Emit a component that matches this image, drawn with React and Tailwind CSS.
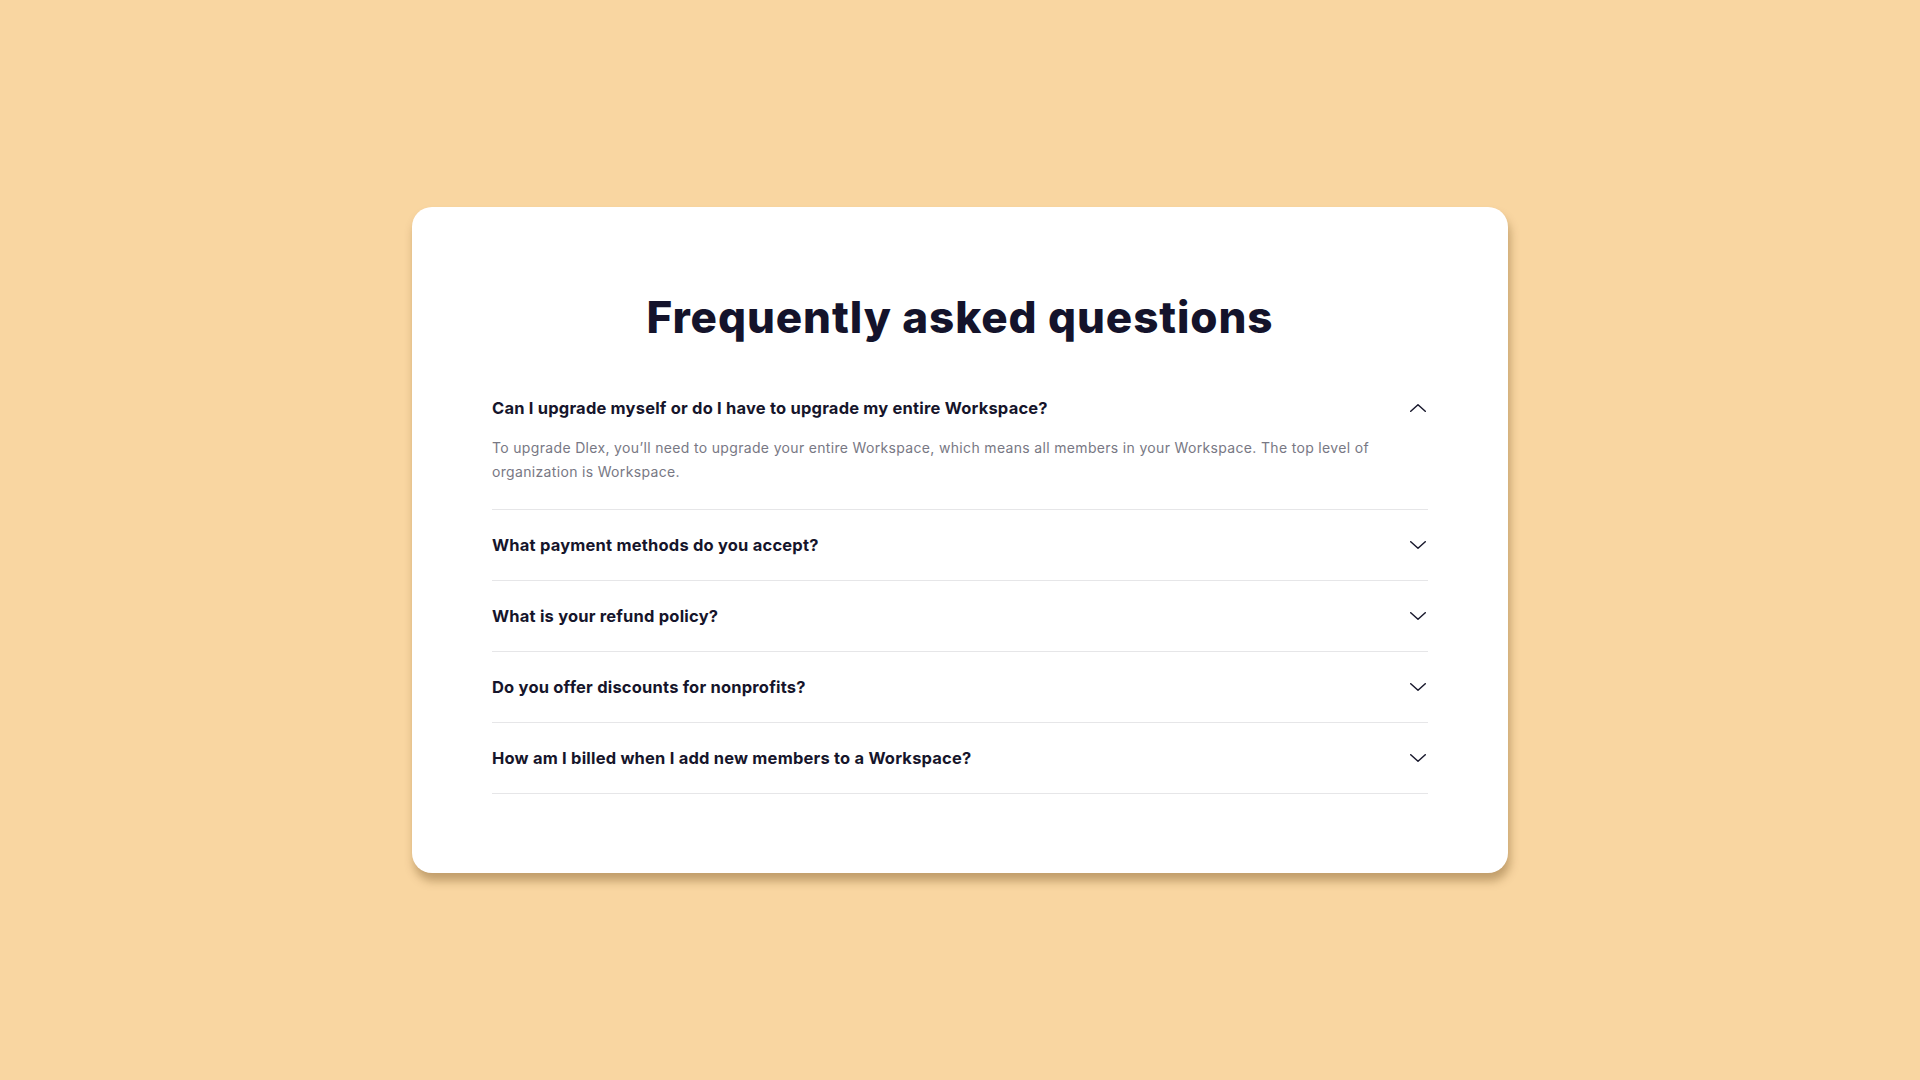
import React, { useState } from "react";

const faqs = [
  {
    q: "Can I upgrade myself or do I have to upgrade my entire Workspace?",
    a: "To upgrade Dlex, you’ll need to upgrade your entire Workspace, which means all members in your Workspace. The top level of organization is Workspace.",
  },
  { q: "What payment methods do you accept?", a: "" },
  { q: "What is your refund policy?", a: "" },
  { q: "Do you offer discounts for nonprofits?", a: "" },
  { q: "How am I billed when I add new members to a Workspace?", a: "" },
];

function Chevron({ up }) {
  return (
    <svg
      width="16"
      height="8"
      viewBox="0 0 16 8"
      fill="none"
      className={up ? "rotate-180 mr-[2px] shrink-0" : "mr-[2px] shrink-0"}>
      <path
        d="M0.75 0.75 L8 7.25 L15.25 0.75"
        stroke="#1a1a2e"
        strokeWidth="1.5"
        strokeLinecap="round"
        strokeLinejoin="round"
      />
    </svg>
  );
}

function FaqItem({ item, open, onToggle }) {
  return (
    <div className="border-b border-[#e6e6e8]">
      <button
        onClick={onToggle}
        className={
          open
            ? "flex w-full items-center justify-between pt-[23px] pb-[16px] text-left"
            : "flex w-full items-center justify-between py-[23px] text-left"
        }>
        <span className="text-[16.5px] leading-[24px] font-bold text-[#16152b] tracking-[0.2px]">
          {item.q}
        </span>
        <Chevron up={open} />
      </button>
      {open && (
        <p className="pb-[25px] pr-[40px] text-[14px] leading-[24px] text-[#787884] tracking-[0.33px]">
          {item.a}
        </p>
      )}
    </div>
  );
}

export default function App() {
  const [openIdx, setOpenIdx] = useState(0);

  return (
    <div
      className="min-h-screen w-full bg-[#f9d6a1] flex items-center justify-center"
      style={{ fontFamily: "Inter, 'Noto Sans', sans-serif" }}>
      <section className="w-[1096px] bg-white rounded-[20px] shadow-[2px_8px_10px_rgba(90,55,10,0.35)] px-[80px] pt-[82px] pb-[79px]">
        <h2 className="text-center text-[44px] leading-[56px] font-extrabold text-[#14132b] tracking-[0.9px] mb-[28px]">
          Frequently asked questions
        </h2>
        <div>
          {faqs.map((item, i) => (
            <FaqItem
              key={i}
              item={item}
              open={openIdx === i}
              onToggle={() => setOpenIdx(openIdx === i ? -1 : i)}
            />
          ))}
        </div>
      </section>
    </div>
  );
}
